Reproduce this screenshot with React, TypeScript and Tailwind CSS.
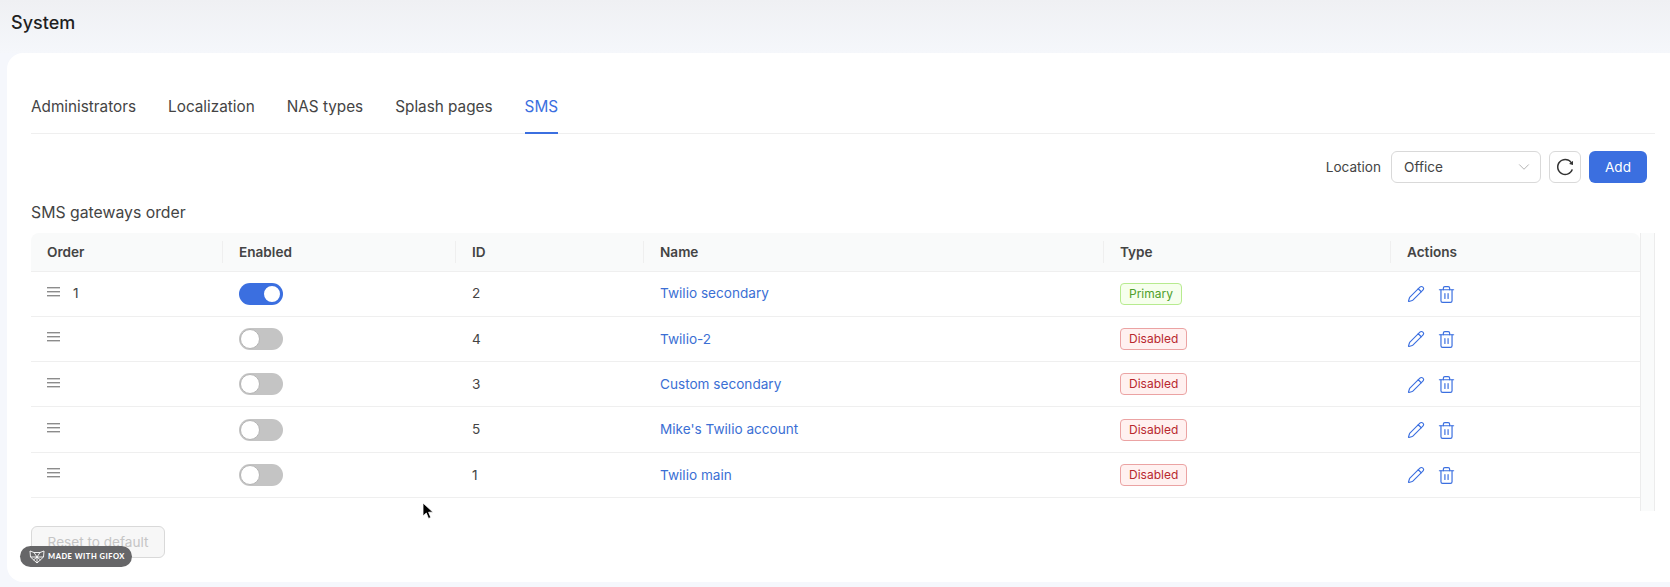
import React from 'react';
import { ChevronDown, Pencil, Trash2 } from 'lucide-react';
import { AiOutlineReload } from 'react-icons/ai';

type Gateway = {
  order?: number;
  enabled: boolean;
  id: number;
  name: string;
  type: 'Primary' | 'Disabled';
};

const gateways: Gateway[] = [
  { order: 1, enabled: true, id: 2, name: 'Twilio secondary', type: 'Primary' },
  { enabled: false, id: 4, name: 'Twilio-2', type: 'Disabled' },
  { enabled: false, id: 3, name: 'Custom secondary', type: 'Disabled' },
  { enabled: false, id: 5, name: "Mike's Twilio account", type: 'Disabled' },
  { enabled: false, id: 1, name: 'Twilio main', type: 'Disabled' },
];

const tabs = ['Administrators', 'Localization', 'NAS types', 'Splash pages', 'SMS'];
const columns = ['Order', 'Enabled', 'ID', 'Name', 'Type', 'Actions'];

const DragHandle = () => (
  <svg width="13" height="10" viewBox="0 0 13 10" className="mb-[3px] shrink-0 text-[#8c8c8c]" fill="currentColor">
    <rect x="0" y="0" width="13" height="1.4" />
    <rect x="0" y="4" width="13" height="1.4" />
    <rect x="0" y="8" width="13" height="1.4" />
  </svg>
);

const Toggle = ({ on }: { on: boolean }) => (
  <div className={`flex h-[22px] w-[44px] rounded-full p-px ${on ? 'justify-end bg-[#3b6fe0]' : 'justify-start bg-[#c4c4c4]'}`}>
    <div className={`h-5 w-5 rounded-full bg-white ${on ? 'border-2 border-[#3b6fe0]' : 'border border-[#b5b5b5]'}`} />
  </div>
);

const Tag = ({ type }: { type: Gateway['type'] }) => (
  <span
    className={`inline-flex h-[22px] items-center rounded border px-2 text-xs ${
      type === 'Primary'
        ? 'border-[#b7eb8f] bg-[#f6ffed] text-[#4f9f2c]'
        : 'border-[#eba3a3] bg-[#fff1f0] text-[#b8282e]'
    }`}
  >
    {type}
  </span>
);

const GifoxBadge = () => (
  <div className="absolute bottom-[20px] left-[20px] flex h-[21px] w-[112px] items-center gap-[3px] rounded-full bg-[#666668] pl-[9px]">
    <svg width="16" height="14" viewBox="0 0 16 14" fill="none" stroke="white" strokeWidth="0.9" className="shrink-0">
      <path d="M1 1l4 1.500h6L15 1l-.5 6L8 13 1.500 7z" />
      <path d="M5 2.500L8 7l3-4.500M1.500 7L8 7l6.500 0M8 7v6M4.500 10L8 7l3.500 3" />
    </svg>
    <span className="text-[7.5px] font-black tracking-[0.5px] text-white [font-family:Lato,sans-serif]">MADE WITH GIFOX</span>
  </div>
);

const Cursor = () => (
  <svg width="13" height="18" viewBox="0 0 13 18" className="absolute left-[422px] top-[502px]">
    <path d="M1 1v13l3.300-3 2.200 5.500 2.300-1-2.200-5.300H11z" fill="#000" stroke="#fff" strokeWidth="0.8" />
  </svg>
);

export default function App() {
  return (
    <div className="relative h-[587px] overflow-hidden bg-[#f5f7fc] text-[#444] [font-family:Inter,sans-serif]">
      <h1 className="flex h-[53px] items-center bg-gradient-to-b from-[#eff0f3] to-[#f5f7fb] pb-[7px] pl-[11px] text-lg font-medium text-[#1f1f1f]">System</h1>

      <div className="ml-[7px] h-[529px] rounded-tl-2xl rounded-bl-2xl bg-white pl-[24px] pr-[15px] pt-[18px]">
        {/* Tabs */}
        <div className="flex h-[63px] gap-8 border-b border-[#efefef]">
          {tabs.map((tab) => (
            <div
              key={tab}
              className={`-mb-px flex items-center border-b-2 pt-[11px] text-[15.3px] ${
                tab === 'SMS' ? 'border-[#3b6fe0] text-[#3b6fe0]' : 'border-transparent text-[#444]'
              }`}
            >
              {tab}
            </div>
          ))}
        </div>

        {/* Toolbar */}
        <div className="mr-[8px] mt-[17px] flex items-center justify-end text-[13.6px]">
          <span className="mr-[10px]">Location</span>
          <div className="flex h-8 w-[150px] items-center justify-between rounded-md border border-[#d9d9d9] pl-3 pr-[7px]">
            Office
            <ChevronDown size={18} strokeWidth={1} className="text-[#9a9a9a]" />
          </div>
          <div className="ml-2 flex h-8 w-8 items-center justify-center rounded-md border border-[#d9d9d9]">
            <AiOutlineReload size={20} className="text-[#333]" />
          </div>
          <div className="ml-2 flex h-8 w-[58px] items-center justify-center rounded-md bg-[#3b6fe0] text-white">Add</div>
        </div>

        <h2 className="mt-[18px] h-[32px] text-[15.800px] leading-[24px]">SMS gateways order</h2>

        {/* Table */}
        <div className="flex h-[278px]">
          <div className="min-w-0 flex-1">
            <table className="w-full table-fixed border-collapse text-[13.6px]">
              <colgroup>
                <col className="w-[192px]" />
                <col className="w-[233px]" />
                <col className="w-[188px]" />
                <col className="w-[460px]" />
                <col className="w-[287px]" />
                <col />
              </colgroup>
              <thead>
                <tr className="h-[38px] border-b border-[#efefef] bg-[#f9fafa]">
                  {columns.map((col, i) => (
                    <th key={col} className={`px-4 text-left font-semibold ${i === 0 ? 'rounded-tl-lg' : ''} ${i === 5 ? 'rounded-tr-lg' : ''}`}>
                      <div className={`flex h-[22px] items-center ${i > 0 ? '-ml-[17px] border-l border-[#efefef] pl-4' : ''}`}>{col}</div>
                    </th>
                  ))}
                </tr>
              </thead>
              <tbody>
                {gateways.map((g) => (
                  <tr key={g.id} className="h-[45.300px] border-b border-[#efefef]">
                    <td className="px-4">
                      <div className="flex items-center gap-[13px]">
                        <DragHandle />
                        {g.order && <span className="leading-none">{g.order}</span>}
                      </div>
                    </td>
                    <td className="px-4">
                      <Toggle on={g.enabled} />
                    </td>
                    <td className="px-4">{g.id}</td>
                    <td className="px-4 text-[#3b6fd4]">{g.name}</td>
                    <td className="px-4">
                      <Tag type={g.type} />
                    </td>
                    <td className="px-4">
                      <div className="flex items-center gap-[12px] pt-px text-[#3b6fe0]">
                        <Pencil size={18} strokeWidth={1.5} />
                        <Trash2 size={19} strokeWidth={1.5} />
                      </div>
                    </td>
                  </tr>
                ))}
              </tbody>
            </table>
          </div>
          {/* Scrollbar gutter */}
          <div className="w-[15px] shrink-0 border-x border-[#ececec] bg-[#fafbfb]" />
        </div>

        <div className="mt-[15px] flex h-8 w-[134px] items-center justify-center rounded-md border border-[#d9d9d9] bg-[#f7f7f7] text-[13.6px] text-[#c5c5c5]">
          Reset to default
        </div>
      </div>

      <GifoxBadge />
      <Cursor />
    </div>
  );
}
